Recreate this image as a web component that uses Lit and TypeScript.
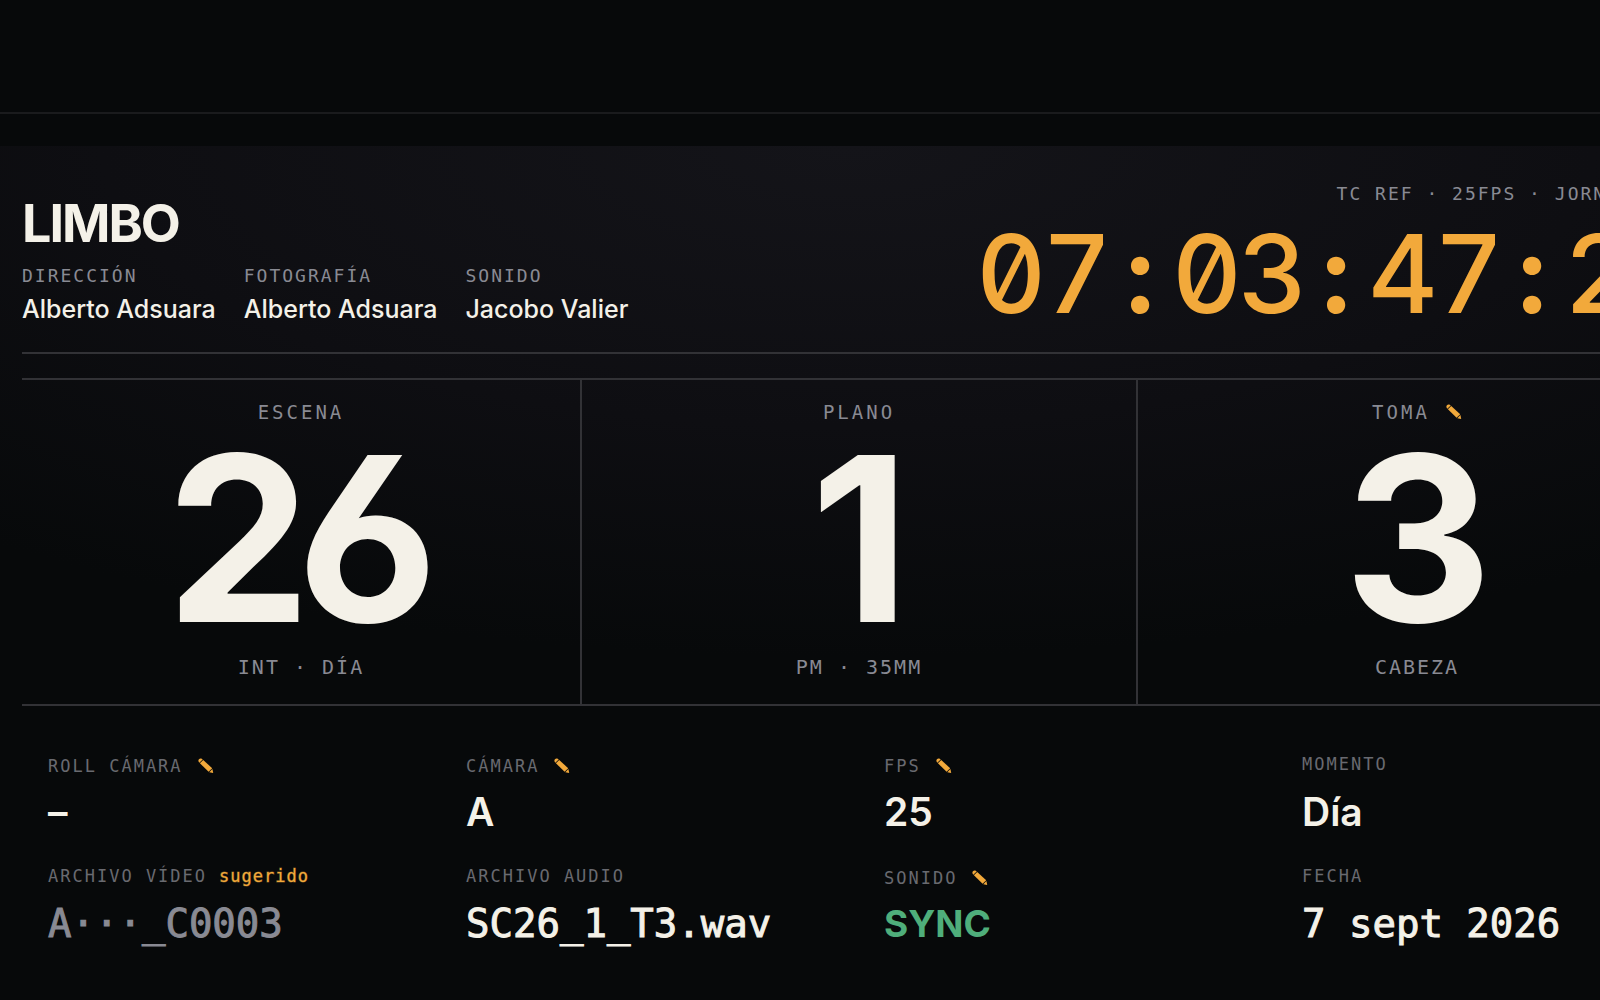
import { LitElement, html, css, svg, nothing } from "lit";
import { customElement, property } from "lit/decorators.js";
import { classMap } from "lit/directives/class-map.js";

interface Credit {
  role: string;
  name: string;
}

interface Counter {
  label: string;
  value: string;
  note: string;
  editable?: boolean;
}

interface Field {
  label: string;
  value: string;
  hint?: string;
  editable?: boolean;
  mono?: boolean;
  tone?: "muted" | "ok";
}

const credits: Credit[] = [
  { role: "DIRECCIÓN", name: "Alberto Adsuara" },
  { role: "FOTOGRAFÍA", name: "Alberto Adsuara" },
  { role: "SONIDO", name: "Jacobo Valier" },
];

const timecode = ["07", "03", "47", "21"];

const counters: Counter[] = [
  { label: "ESCENA", value: "26", note: "INT · DÍA" },
  { label: "PLANO", value: "1", note: "PM · 35MM" },
  { label: "TOMA", value: "3", note: "CABEZA", editable: true },
];

const fields: Field[] = [
  { label: "ROLL CÁMARA", value: "–", editable: true },
  { label: "CÁMARA", value: "A", editable: true },
  { label: "FPS", value: "25", editable: true },
  { label: "MOMENTO", value: "Día" },
  { label: "ARCHIVO VÍDEO", value: "A···_C0003", hint: "sugerido", mono: true, tone: "muted" },
  { label: "ARCHIVO AUDIO", value: "SC26_1_T3.wav", mono: true },
  { label: "SONIDO", value: "SYNC", editable: true, tone: "ok" },
  { label: "FECHA", value: "7 sept 2026", mono: true },
];

@customElement("edit-button")
export class EditButton extends LitElement {
  @property() label = "";

  static styles = css`
    :host {
      display: inline-flex;
    }
    .edit {
      display: flex;
      align-items: center;
      margin: 0;
      padding: 0;
      border: 0;
      background: none;
      color: #f2a93b;
      cursor: pointer;
    }
    .icon {
      display: block;
      width: 16px;
      height: 16px;
    }
  `;

  render() {
    return html`<button class="edit" type="button" aria-label="Editar ${this.label}">
      <svg class="icon" viewBox="0 0 16 16" fill="currentColor" aria-hidden="true">
        ${svg`
          <path d="M0.4 2.8 C0.3 1.4 1.4 0.4 2.8 0.5 C3.6 0.5 4.2 0.9 4.7 1.4 L1.3 4.8 C0.8 4.2 0.4 3.6 0.4 2.8 Z" />
          <path d="M5.2 2 L14.2 10.2 L10.6 13.8 L1.9 5.2 Z" />
          <path d="M14.4 10.9 L15.2 15 L11.3 14.2 Z" />
        `}
      </svg>
    </button>`;
  }
}

@customElement("app-root")
export class AppRoot extends LitElement {
  static styles = css`
    :host {
      --sans: Inter, "Liberation Sans", sans-serif;
      --mono: "DejaVu Sans Mono", "Liberation Mono", monospace;
      --cream: #f4f1e8;
      --grey: #898a93;
      --dim: #696a70;
      --amber: #f2a93b;
      --line: #323236;
      display: block;
      min-height: 100vh;
      overflow: hidden;
      background: #07090a;
      color: var(--cream);
      font-family: var(--sans);
    }
    .topbar {
      height: 112px;
      border-bottom: 2px solid #1a1b1d;
    }
    .stage {
      margin-top: 32px;
      margin-right: -96px;
      padding: 36px 0 52px 22px;
      background: radial-gradient(ellipse 80% 60% at 50% 0, #141419 0%, #0e0e12 55%, #07090a 100%);
    }
    .header {
      display: flex;
      justify-content: space-between;
      align-items: flex-end;
      padding-bottom: 28px;
      border-bottom: 2px solid var(--line);
    }
    .title {
      margin: 0 0 14px;
      font-size: 52px;
      line-height: 52px;
      font-weight: 700;
      letter-spacing: -2px;
    }
    .credits {
      display: flex;
      gap: 28px;
      margin: 0;
    }
    .role,
    .reference {
      font-family: var(--mono);
      font-size: 18px;
      line-height: 24px;
      letter-spacing: 2px;
      color: var(--grey);
    }
    .name {
      margin: 6px 0 0;
      font-size: 25px;
      line-height: 30px;
      font-weight: 500;
    }
    .clock {
      display: flex;
      flex-direction: column;
      align-items: flex-end;
      gap: 18px;
      white-space: nowrap;
    }
    .timecode {
      display: flex;
      font-size: 108px;
      line-height: 100px;
      font-weight: 500;
      letter-spacing: -4px;
      font-feature-settings: "tnum", "zero";
      color: var(--amber);
    }
    .colon {
      width: 64px;
      text-align: center;
      letter-spacing: 0;
      font-weight: 700;
    }
    .counters {
      display: grid;
      grid-template-columns: 558fr 556fr 560fr;
      margin-top: 24px;
      border-top: 2px solid var(--line);
      border-bottom: 2px solid var(--line);
    }
    .counter {
      display: flex;
      flex-direction: column;
      align-items: center;
      padding: 20px 0 25px;
    }
    .counter + .counter {
      border-left: 2px solid var(--line);
    }
    .counter-label {
      display: flex;
      align-items: center;
      gap: 16px;
      font-family: var(--mono);
      font-size: 19px;
      line-height: 24px;
      letter-spacing: 3px;
      color: var(--grey);
    }
    .counter-value {
      margin: 22px 0 25px;
      padding-right: 12px;
      font-size: 230px;
      line-height: 184px;
      font-weight: 700;
      letter-spacing: -14px;
      font-feature-settings: "cv03";
    }
    .counter-note {
      font-family: var(--mono);
      font-size: 20px;
      line-height: 24px;
      letter-spacing: 2px;
      color: var(--grey);
    }
    .fields {
      display: grid;
      grid-template-columns: repeat(4, minmax(0, 1fr));
      gap: 30px 48px;
      margin: 0;
      padding: 46px 24px 0 26px;
    }
    .field {
      display: flex;
      flex-direction: column;
      justify-content: space-between;
      min-height: 82px;
    }
    .field-label {
      display: flex;
      align-items: center;
      gap: 15px;
      font-family: var(--mono);
      font-size: 17px;
      line-height: 24px;
      letter-spacing: 2px;
      color: var(--dim);
      white-space: nowrap;
    }
    .field-label.editable {
      line-height: 28px;
    }
    .field-label.hinted {
      gap: 12px;
    }
    .hint {
      letter-spacing: 1px;
      color: var(--amber);
      -webkit-text-stroke: 1px rgb(242 169 59 / 40%);
    }
    .field-value {
      margin: 0;
      font-size: 39px;
      line-height: 44px;
      font-weight: 600;
      white-space: nowrap;
    }
    .field-value.mono {
      font-family: var(--mono);
      font-weight: 400;
      -webkit-text-stroke: 1px currentColor;
    }
    .field-value.muted {
      color: var(--grey);
    }
    .field-value.ok {
      color: #4fae7b;
      font-size: 37px;
      font-weight: 700;
    }
  `;

  private renderCounter(c: Counter) {
    return html`<section class="counter">
      <div class="counter-label">
        <span>${c.label}</span>
        ${c.editable ? html`<edit-button label=${c.label}></edit-button>` : nothing}
      </div>
      <div class="counter-value">${c.value}</div>
      <div class="counter-note">${c.note}</div>
    </section>`;
  }

  private renderField(f: Field) {
    const labelClasses = { "field-label": true, editable: !!f.editable, hinted: !!f.hint };
    const valueClasses = {
      "field-value": true,
      mono: !!f.mono,
      muted: f.tone === "muted",
      ok: f.tone === "ok",
    };
    return html`<div class="field">
      <dt class=${classMap(labelClasses)}>
        <span>${f.label}</span>
        ${f.hint ? html`<span class="hint">${f.hint}</span>` : nothing}
        ${f.editable ? html`<edit-button label=${f.label}></edit-button>` : nothing}
      </dt>
      <dd class=${classMap(valueClasses)}>${f.value}</dd>
    </div>`;
  }

  render() {
    return html`
      <div class="topbar"></div>
      <main class="stage">
        <header class="header">
          <div>
            <h1 class="title">LIMBO</h1>
            <dl class="credits">
              ${credits.map(
                (c) => html`<div>
                  <dt class="role">${c.role}</dt>
                  <dd class="name">${c.name}</dd>
                </div>`,
              )}
            </dl>
          </div>
          <div class="clock">
            <div class="reference">TC REF · 25FPS · JORNADA 1/5</div>
            <div class="timecode">
              ${timecode.map(
                (pair, i) => html`${i > 0 ? html`<span class="colon">:</span>` : nothing}<span>${pair}</span>`,
              )}
            </div>
          </div>
        </header>
        <div class="counters">${counters.map((c) => this.renderCounter(c))}</div>
        <dl class="fields">${fields.map((f) => this.renderField(f))}</dl>
      </main>
    `;
  }
}
